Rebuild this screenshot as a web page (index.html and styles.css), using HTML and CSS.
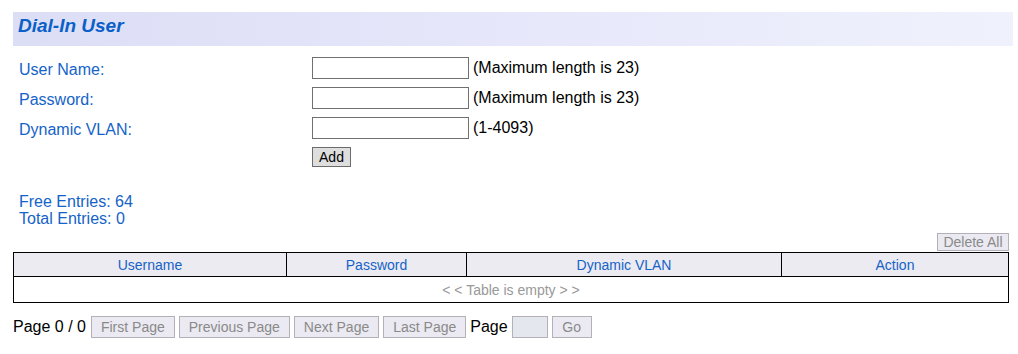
FILE: index.html
```html
<!DOCTYPE html>
<html lang="en">
<head>
  <meta charset="UTF-8">
  <meta name="viewport" content="width=device-width, initial-scale=1.0">
  <title>Dial-In User</title>
  <link rel="stylesheet" href="styles.css">
</head>
<body>
  <h2 class="title">Dial-In User</h2>

  <form id="dialInForm" class="entry-form">
    <label for="userName">User Name:</label>
    <div class="field">
      <input type="text" id="userName" name="userName" maxlength="23">
      <span class="hint">(Maximum length is 23)</span>
    </div>

    <label for="password">Password:</label>
    <div class="field">
      <input type="password" id="password" name="password" maxlength="23">
      <span class="hint">(Maximum length is 23)</span>
    </div>

    <label for="vlan">Dynamic VLAN:</label>
    <div class="field">
      <input type="text" id="vlan" name="vlan">
      <span class="hint">(1-4093)</span>
    </div>

    <span></span>
    <div class="field">
      <button type="submit" class="btn-add">Add</button>
    </div>
  </form>

  <div class="counts">
    <div>Free Entries: 64</div>
    <div>Total Entries: 0</div>
  </div>

  <div class="table-tools">
    <button type="button" class="btn-off" disabled>Delete All</button>
  </div>

  <table class="user-table">
    <thead>
      <tr>
        <th class="col-user">Username</th>
        <th class="col-pass">Password</th>
        <th class="col-vlan">Dynamic VLAN</th>
        <th>Action</th>
      </tr>
    </thead>
    <tbody>
      <tr>
        <td colspan="4" class="empty">&lt; &lt; Table is empty &gt; &gt;</td>
      </tr>
    </tbody>
  </table>

  <div class="pager">
    <span class="page-info">Page 0 / 0</span>
    <button type="button" class="btn-off" disabled>First Page</button>
    <button type="button" class="btn-off" disabled>Previous Page</button>
    <button type="button" class="btn-off" disabled>Next Page</button>
    <button type="button" class="btn-off" disabled>Last Page</button>
    <span>Page</span>
    <input type="text" class="page-input" disabled>
    <button type="button" class="btn-off btn-go" disabled>Go</button>
  </div>
</body>
</html>
```

FILE: styles.css
```css
body {
  font-family: Arial, "Liberation Sans", sans-serif;
  font-size: 16px;
  margin: 12px 5px 0 13px;
  color: #000;
}
.title {
  margin: 0;
  height: 34px;
  line-height: 28px;
  padding-left: 5px;
  font-size: 19px;
  font-style: italic;
  font-weight: bold;
  color: #0a5fc8;
  background: linear-gradient(to right, #dcdef6, #e6e7fa 50%, #eff2fc);
}
.entry-form {
  display: grid;
  grid-template-columns: 299px 1fr;
  row-gap: 8px;
  margin-top: 11px;
}
.entry-form label {
  color: #1563c8;
  padding-left: 6px;
  padding-top: 5px;
  line-height: 16px;
}
.field {
  display: flex;
  align-items: center;
  gap: 4px;
}
.field input {
  width: 157px;
  height: 22px;
  box-sizing: border-box;
  border: 1px solid #707070;
  padding: 1px 3px;
  margin: 0;
  font-size: 14px;
}
.btn-add {
  height: 20px;
  width: 39px;
  padding: 0;
  margin: 0;
  font-family: Arial, "Liberation Sans", sans-serif;
  font-size: 14px;
  color: #000;
  background: #dedede;
  border: 1px solid #6c6c6c;
}
.counts {
  margin-top: 26px;
  padding-left: 6px;
  color: #1563c8;
  line-height: 17px;
}
.table-tools {
  display: flex;
  justify-content: flex-end;
  width: 996px;
  margin-top: 6px;
  margin-bottom: 1px;
}
.btn-off {
  height: 22px;
  padding: 0 9px;
  margin: 0;
  font-family: Arial, "Liberation Sans", sans-serif;
  font-size: 14px;
  color: #8a8a8a;
  background: #ebe9f1;
  border: 1px solid #b4b0b8;
}
.table-tools .btn-off {
  height: 18px;
  width: 72px;
  padding: 0;
}
.user-table {
  width: 996px;
  border-collapse: collapse;
  border: 1px solid #000;
  font-size: 14px;
}
.user-table th {
  height: 23px;
  padding: 0;
  font-weight: normal;
  color: #1563c8;
  background: #ecebf1;
  border: 1px solid #000;
}
.col-user { width: 272px; }
.col-pass { width: 179px; }
.col-vlan { width: 314px; }
.empty {
  height: 25px;
  padding: 0;
  text-align: center;
  color: #999;
}
.pager {
  display: flex;
  align-items: center;
  gap: 4px;
  margin-top: 13px;
}
.page-info {
  margin-right: 1px;
}
.page-input {
  width: 36px;
  height: 22px;
  box-sizing: border-box;
  margin: 0;
  border: 1px solid #b4b0b8;
  background: #e4e7ee;
}
.btn-go {
  width: 40px;
  padding: 0;
}
```
